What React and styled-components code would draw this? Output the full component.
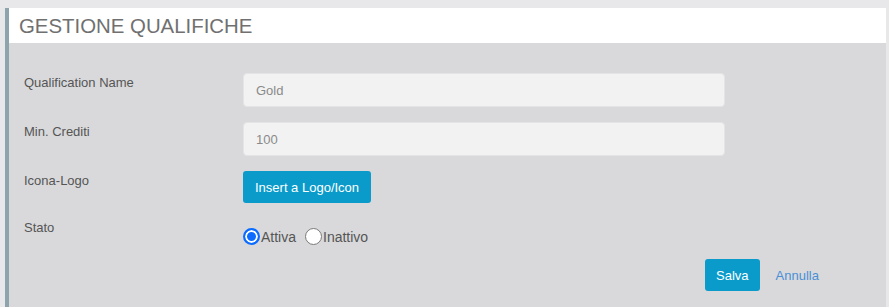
import React, { useState } from "react";
import styled, { createGlobalStyle } from "styled-components";

const Global = createGlobalStyle`
  html, body { margin: 0; padding: 0; background: #e8e8ea; }
  body { font-family: "Liberation Sans", Arial, sans-serif; }
  * { box-sizing: border-box; }
`;

const Page = styled.div`
  padding: 8px 3px 0 5px;
  min-height: 307px;
  display: flex;
`;

const Panel = styled.section`
  flex: 1;
  border-left: 4px solid #8fa3ad;
  display: flex;
  flex-direction: column;
  min-height: 299px;
`;

const Header = styled.header`
  background: #ffffff;
  height: 35px;
  padding-left: 10px;
  display: flex;
  align-items: center;
`;

const Title = styled.h1`
  margin: 0;
  font-size: 20.4px;
  font-weight: 400;
  color: #707070;
  letter-spacing: 0;
  line-height: 35px;
  padding-top: 2px;
`;

const Body = styled.div`
  flex: 1;
  background: #d9d9db;
  padding: 30px 15px 15px 15px;
`;

const Form = styled.form`
  display: grid;
  grid-template-columns: 219px 482px;
  row-gap: 15px;
`;

const Label = styled.label`
  font-size: 13px;
  line-height: 20px;
  color: #555;
`;

const Input = styled.input`
  height: 34px;
  width: 100%;
  background: #f2f2f2;
  border: 1px solid #e4e4e6;
  border-radius: 4px;
  padding: 0 12px;
  font-family: inherit;
  font-size: 13px;
  color: #8a8a8a;
  outline: none;
`;

const Button = styled.button`
  height: 32px;
  background: #0a9bcb;
  color: #ffffff;
  border: none;
  border-radius: 3px;
  padding: 0 ${(p) => p.$px || 12}px;
  font-family: inherit;
  font-size: 13px;
  cursor: pointer;
  justify-self: start;
`;

const RadioGroup = styled.div`
  display: flex;
  align-items: center;
  padding-top: 5px;
  height: 32px;
`;

const RadioLabel = styled.label`
  display: flex;
  align-items: center;
  font-size: 14px;
  color: #555;
  margin-right: 9px;
  cursor: pointer;
`;

const RadioDot = styled.span`
  width: 17px;
  height: 17px;
  border-radius: 50%;
  margin-right: 1px;
  background: ${(p) => (p.$checked ? "#0b6cff" : "#ffffff")};
  border: ${(p) => (p.$checked ? "2px solid #0b6cff" : "1px solid #7a7a7a")};
  box-shadow: ${(p) => (p.$checked ? "inset 0 0 0 2px #ffffff" : "none")};
`;

const Actions = styled.div`
  display: flex;
  align-items: center;
  gap: 16px;
  padding-left: 681px;
  margin-top: 9px;
`;

const LinkButton = styled.a`
  font-size: 13px;
  color: #4a8fd6;
  text-decoration: none;
  cursor: pointer;
`;

export default function App() {
  const [stato, setStato] = useState("attiva");
  return (
    <>
      <Global />
      <Page>
        <Panel>
          <Header>
            <Title>GESTIONE QUALIFICHE</Title>
          </Header>
          <Body>
            <Form onSubmit={(e) => e.preventDefault()}>
              <Label>Qualification Name</Label>
              <Input defaultValue="Gold" />
              <Label>Min. Crediti</Label>
              <Input defaultValue="100" />
              <Label>Icona-Logo</Label>
              <Button type="button">Insert a Logo/Icon</Button>
              <Label>Stato</Label>
              <RadioGroup>
                <RadioLabel onClick={() => setStato("attiva")}>
                  <RadioDot $checked={stato === "attiva"} />
                  Attiva
                </RadioLabel>
                <RadioLabel onClick={() => setStato("inattivo")}>
                  <RadioDot $checked={stato === "inattivo"} />
                  Inattivo
                </RadioLabel>
              </RadioGroup>
            </Form>
            <Actions>
              <Button type="button" $px={11}>Salva</Button>
              <LinkButton>Annulla</LinkButton>
            </Actions>
          </Body>
        </Panel>
      </Page>
    </>
  );
}
